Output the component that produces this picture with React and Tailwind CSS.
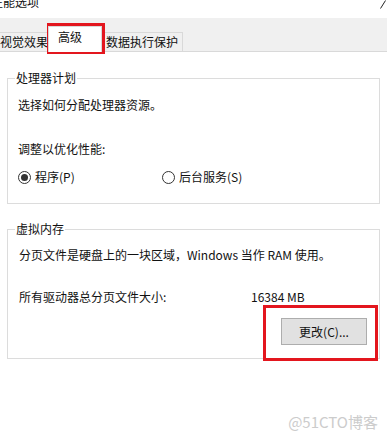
import React from 'react';

function Radio({ checked, label }) {
    return (
        <div className="flex items-center gap-[4px]">
            <span className="flex h-[13px] w-[13px] items-center justify-center rounded-full border border-[#333333] bg-white">
                {checked && <span className="h-[7px] w-[7px] rounded-full bg-[#333333]" />}
            </span>
            <span className="leading-[16px]">{label}</span>
        </div>
    );
}

function GroupBox({ title, className, children }) {
    return (
        <fieldset className={`mx-[7px] border border-[#dcdcdc] ${className}`}>
            <legend className="ml-[7px] px-[1px] leading-[14px]">{title}</legend>
            {children}
        </fieldset>
    );
}

export default function App() {
    return (
        <div className="relative h-[440px] w-[387px] overflow-hidden bg-white text-[12px] text-[#111111] font-['Microsoft_YaHei','Noto_Sans_CJK_SC',sans-serif]">
            {/* title bar, cut off at the top like the screenshot */}
            <div className="flex h-[18px] items-start justify-between">
                <span className="ml-[-9px] mt-[-5px] leading-[14px]">性能选项</span>
                <svg width="6" height="9" viewBox="0 0 6 9" className="mr-[1px]">
                    <path d="M0.5 8.5 L5.5 0.5" stroke="#222" strokeWidth="1" fill="none" />
                </svg>
            </div>

            {/* tabs */}
            <div className="flex h-[34px] items-end border-b border-[#d9d9d9] bg-[#f0f0f0] whitespace-nowrap">
                <div className="ml-[-5px] flex h-[19px] w-[53px] shrink-0 items-center border border-b-0 border-[#d9d9d9] bg-[#f0f0f0] pl-[4px]">
                    视觉效果
                </div>
                <div className="relative z-10 mb-[-1px] flex h-[26px] w-[54px] shrink-0 items-start border border-b-0 border-[#d9d9d9] bg-white pl-[9px] pt-[2px] leading-[16px]">
                    高级
                </div>
                <div className="flex h-[19px] w-[81px] shrink-0 items-center border border-b-0 border-l-0 border-[#d9d9d9] bg-[#f0f0f0] pl-[4px]">
                    数据执行保护
                </div>
            </div>

            {/* processor scheduling */}
            <GroupBox title="处理器计划" className="mt-[19px]">
                <div className="pb-[18px] pl-[10px] pt-[12px] leading-[16px]">
                    <div>选择如何分配处理器资源。</div>
                    <div className="mt-[28px]">调整以优化性能:</div>
                    <div className="mt-[12px] flex">
                        <div className="w-[144px]">
                            <Radio checked label="程序(P)" />
                        </div>
                        <Radio label="后台服务(S)" />
                    </div>
                </div>
            </GroupBox>

            {/* virtual memory */}
            <GroupBox title="虚拟内存" className="mt-[18px]">
                <div className="pb-[13px] pl-[11px] pr-[12px] pt-[11px] leading-[16px]">
                    <div>分页文件是硬盘上的一块区域，Windows 当作 RAM 使用。</div>
                    <div className="mt-[26px] flex">
                        <span className="w-[232px]">所有驱动器总分页文件大小:</span>
                        <span>16384 MB</span>
                    </div>
                    <div className="mt-[13px] flex justify-end">
                        <button className="h-[27px] w-[86px] border border-[#adadad] bg-[#e1e1e1] text-[12px] text-[#111111]">
                            更改(C)...
                        </button>
                    </div>
                </div>
            </GroupBox>

            {/* watermark */}
            <div className="mt-[54px] flex justify-end pr-[9px] text-[15px] leading-[18px] text-[#cccccc]">
                @51CTO博客
            </div>

            {/* red highlight boxes */}
            <div className="absolute left-[47px] top-[23px] h-[31px] w-[58px] border-[3px] border-[#e3161e]" />
            <div className="absolute left-[263px] top-[305px] h-[56px] w-[115px] border-[3px] border-[#e3161e]" />
        </div>
    );
}
